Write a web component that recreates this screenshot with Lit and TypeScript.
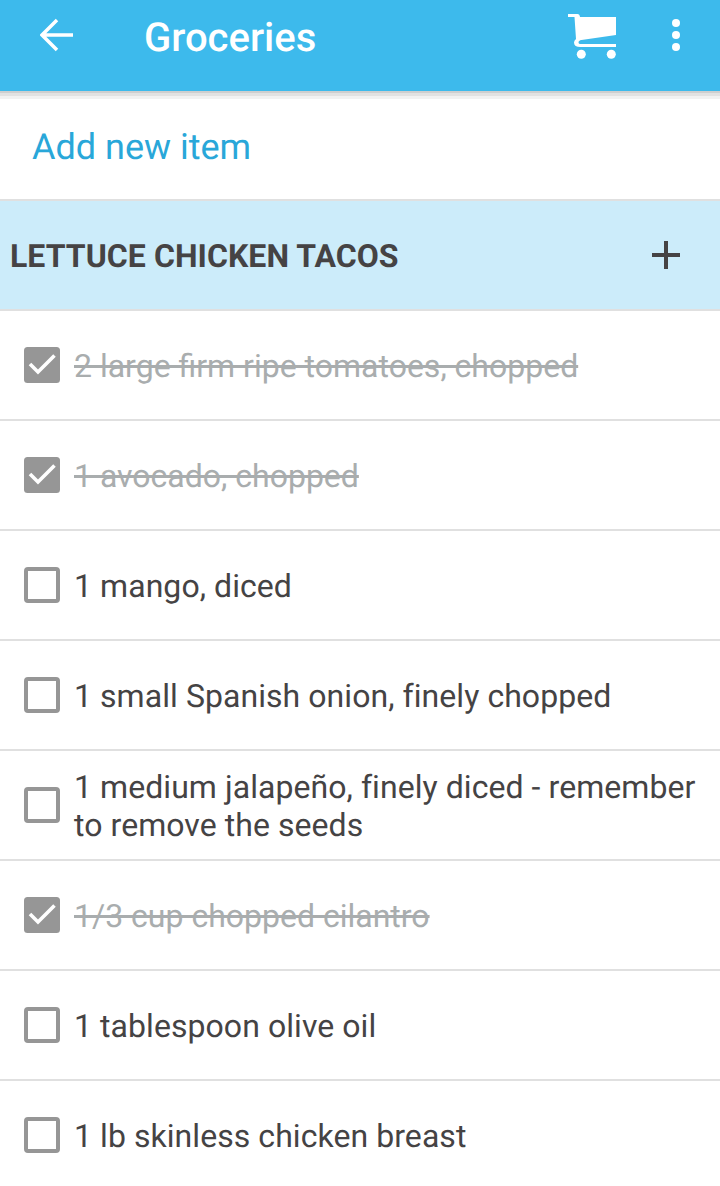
import { LitElement, html, css } from "lit";
import { customElement } from "lit/decorators.js";

const items: { t: string; done?: boolean }[] = [
  { t: "2 large firm ripe tomatoes, chopped", done: true },
  { t: "1 avocado, chopped", done: true },
  { t: "1 mango, diced" },
  { t: "1 small Spanish onion, finely chopped" },
  { t: "1 medium jalapeño, finely diced - remember to remove the seeds" },
  { t: "1/3 cup chopped cilantro", done: true },
  { t: "1 tablespoon olive oil" },
  { t: "1 lb skinless chicken breast" },
];

@customElement("app-root")
export class AppRoot extends LitElement {
  static styles = css`
    :host { display: block; width: 720px; height: 1186px; overflow: hidden; background: #fff; font-family: Roboto, sans-serif; text-rendering: geometricPrecision; }
    .bar { height: 91px; background: #3dbaec; display: flex; align-items: flex-start; position: relative; box-shadow: 0 2px 0 #cfcfcf, 0 5px 0 #e2e2e2, 0 8px 0 #f2f2f2; }
    .back { margin: 18px 0 0 40px; width: 33px; height: 34px; display: block; }
    .title { margin: 15px 0 0 71px; color: #fff; font-size: 40px; line-height: 46px; font-weight: 500; flex: 1; }
    .cart { margin: 14px 0 0 0; width: 48px; height: 45px; display: block; }
    .dots { margin: 19px 37px 0 53px; width: 14px; height: 34px; display: block; }
    .add { height: 110px; box-sizing: border-box; border-bottom: 2px solid #e0e0e0; padding: 34px 0 0 32px; color: #29a7d9; font-size: 36px; line-height: 44px; }
    .section { height: 110px; box-sizing: border-box; border-bottom: 2px solid #e0e0e0; background: #ccecfa; display: flex; align-items: center; justify-content: space-between; padding: 0 40px 0 10px; color: #454344; font-size: 32px; font-weight: 700; }
    .section span { margin-top: 2px; letter-spacing: 0.05px; }
    .plus { width: 28px; height: 28px; display: block; }
    .row { height: 110px; box-sizing: border-box; border-bottom: 2px solid #e0e0e0; display: flex; align-items: center; padding: 0 16px 0 24px; gap: 14px; }
    .box { flex: none; width: 36px; height: 36px; display: block; }
    .text { color: #454344; font-size: 32px; line-height: 38px; margin-top: 2px; letter-spacing: 0.06px; }
    .done .text { color: #a9adae; text-decoration: line-through; letter-spacing: 0; }
  `;

  private box(done?: boolean) {
    return done
      ? html`<svg class="box" viewBox="0 0 36 36"><rect width="36" height="36" rx="3.500" fill="#969696"/><path d="M6 17l8 8L30.500 8.500" fill="none" stroke="#fff" stroke-width="3.600"/></svg>`
      : html`<svg class="box" viewBox="0 0 36 36"><rect x="2" y="2" width="32" height="32" rx="2" fill="#fff" stroke="#969696" stroke-width="4"/></svg>`;
  }

  render() {
    return html`
      <div class="bar">
        <svg class="back" viewBox="0 0 33 34"><path d="M17 2L2 17l15 15M2 17h31" fill="none" stroke="#fff" stroke-width="3.500"/></svg>
        <div class="title">Groceries</div>
        <svg class="cart" viewBox="0 0 48 45">
          <path d="M0 0h9.500q2 0 2.300 2L12 3h36v18L13.500 26q-3 .5-3 2.500 0 1.500 2 1.500H48v3H12.500Q6 33 6 28.500q0-2 2-3.500L6.500 3H0z" fill="#fff"/>
          <circle cx="13.300" cy="40.300" r="4.500" fill="#fff"/><circle cx="43.300" cy="40.300" r="4.500" fill="#fff"/>
        </svg>
        <svg class="dots" viewBox="0 0 14 34"><circle cx="7" cy="4" r="4" fill="#fff"/><circle cx="7" cy="16" r="4" fill="#fff"/><circle cx="7" cy="28" r="4" fill="#fff"/></svg>
      </div>
      <div class="add">Add new item</div>
      <div class="section">
        <span>LETTUCE CHICKEN TACOS</span>
        <svg class="plus" viewBox="0 0 28 28"><path d="M12 0h4v12h12v4H16v12h-4V16H0v-4h12z" fill="#454344"/></svg>
      </div>
      ${items.map(
        (i) => html`<div class="row ${i.done ? "done" : ""}">${this.box(i.done)}<div class="text">${i.t}</div></div>`
      )}
    `;
  }
}
